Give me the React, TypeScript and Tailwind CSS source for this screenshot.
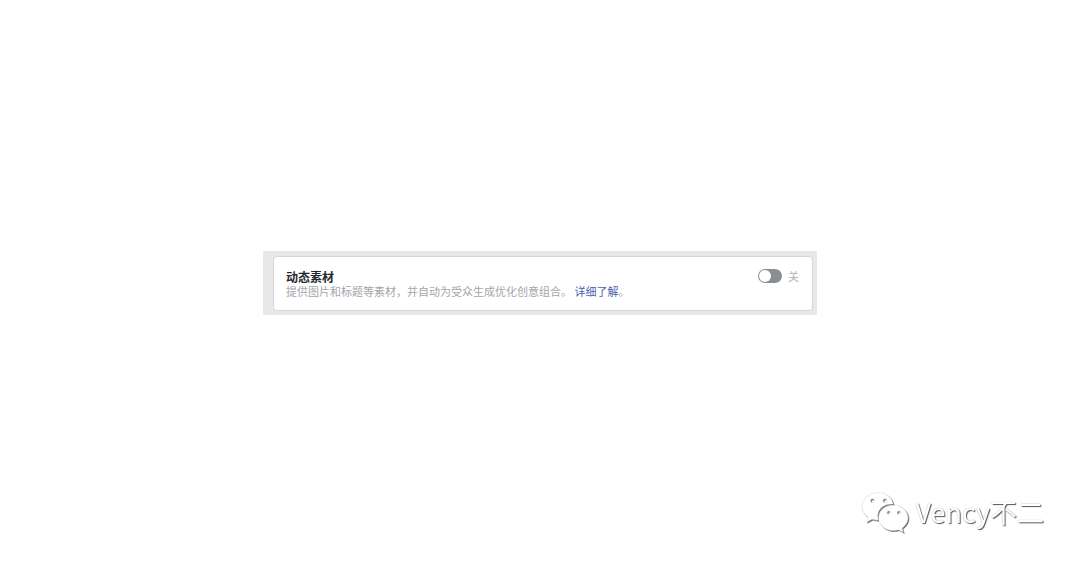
import { useState } from "react";

function DynamicCreativeCard() {
  const [enabled, setEnabled] = useState(false);

  return (
    <section className="w-full max-w-[554px] bg-[#e6e8ea] pt-[5px] pr-1 pb-1 pl-[10px]">
      <div className="flex items-start justify-between rounded-[4px] border border-[#d3d5d8] bg-white pt-3 pr-[13px] pb-3 pl-3">
        <div className="pt-px">
          <h2 className="text-[12px] leading-[14px] font-bold text-[#25282d]">动态素材</h2>
          <p className="text-[11px] leading-[14px] text-[#a3a5a8]">
            提供图片和标题等素材，并自动为受众生成优化创意组合。{" "}
            <a href="#learn-more" className="text-[#4962ab]">详细了解</a>。
          </p>
        </div>
        <label className="flex items-center gap-[6px] text-[11px] leading-[14px] text-[#b0b3b6]">
          <input
            type="checkbox"
            role="switch"
            checked={enabled}
            onChange={(event) => setEnabled(event.target.checked)}
            className="h-[14px] w-6 appearance-none rounded-full bg-[#8b8e91] p-px before:block before:size-3 before:rounded-full before:bg-white checked:bg-[#4962ab] checked:before:ml-[10px]"
          />
          {enabled ? "开" : "关"}
        </label>
      </div>
    </section>
  );
}

function WeChatIcon() {
  return (
    <svg
      viewBox="0 0 50 46"
      className="h-[46px] w-[50px] drop-shadow-[1px_1px_0.5px_#666]"
      fill="#fff"
      stroke="#d4d4d4"
      strokeWidth="0.5"
      fillRule="evenodd"
      aria-hidden="true"
    >
      <path d="M19.500 3.500C10.300 3.500 3 9.600 3 17.300c0 4.500 2.400 8.300 6.100 11L7.500 33.200l5.600-2.900c2.300.6 4.300 1.100 6.200.8C16.500 21.500 24 14.500 34.200 15.100 32.700 8 27 3.500 19.500 3.500ZM13.500 9.800a2 2 0 1 1 0 4 2 2 0 0 1 0-4Zm12.500 0a2 2 0 1 1 0 4 2 2 0 0 1 0-4Z" />
      <path d="M34.500 16.200c-8.300 0-14.800 5.700-14.800 12.700s6.500 12.700 14.800 12.700c1.700 0 3.400-.4 5-.8l4.800 2.600-1.300-4.300c3.500-2.500 6-6.100 6-10.200 0-7-6.700-12.700-14.500-12.700ZM29.800 22a1.700 1.700 0 1 1 0 3.400 1.700 1.700 0 0 1 0-3.400Zm10 0a1.700 1.700 0 1 1 0 3.400 1.700 1.700 0 0 1 0-3.400Z" />
    </svg>
  );
}

export default function App() {
  return (
    <main className="relative flex min-h-screen items-center justify-center bg-white font-['Noto_Sans_CJK_SC',sans-serif]">
      <DynamicCreativeCard />
      <div className="absolute right-9 bottom-[30px] flex items-center gap-[6px] opacity-[0.99]">
        <WeChatIcon />
        <span className="text-[27px] leading-[46px] text-white [text-shadow:1px_1px_1px_#555,0_0_1px_#999]">
          Vency不二
        </span>
      </div>
    </main>
  );
}
